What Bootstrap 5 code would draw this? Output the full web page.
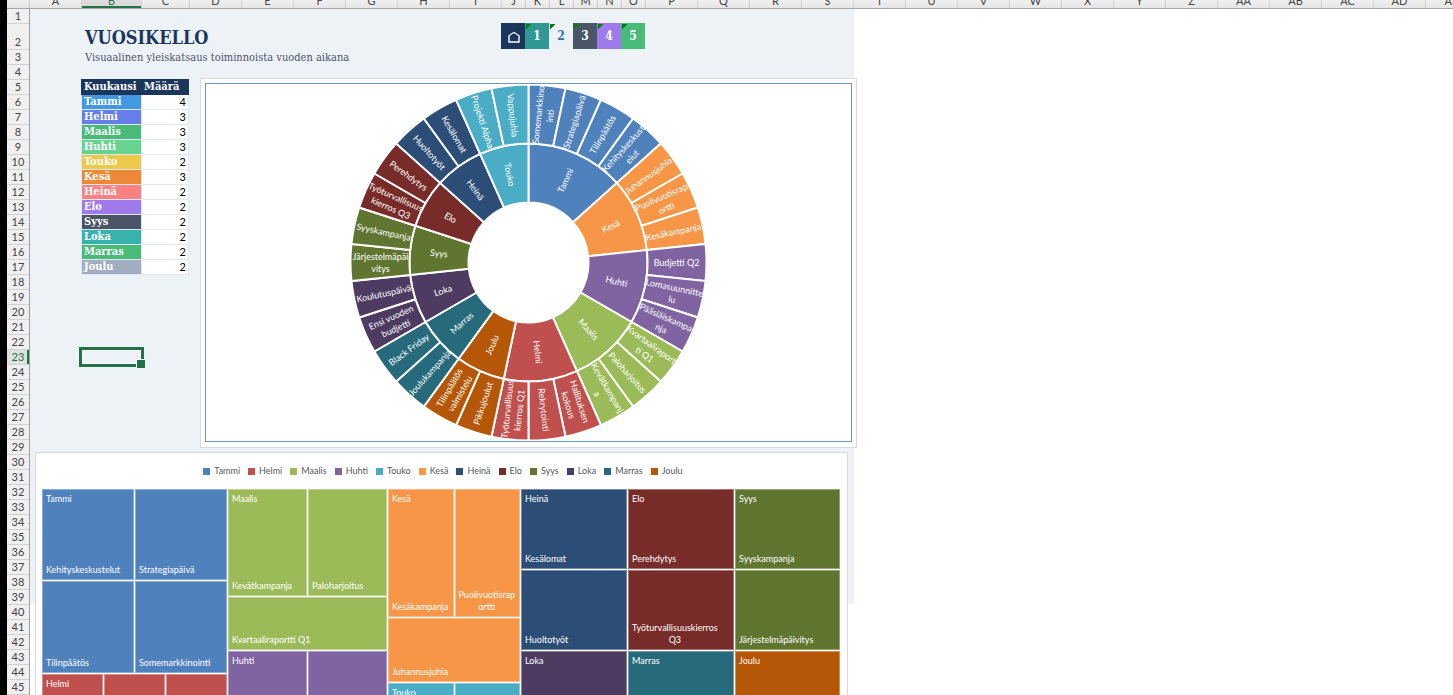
<!DOCTYPE html>
<html lang="fi">
<head>
<meta charset="utf-8">
<meta name="viewport" content="width=device-width, initial-scale=1">
<title>Vuosikello</title>
<link href="https://cdn.jsdelivr.net/npm/bootstrap@5.3.0/dist/css/bootstrap.min.css" rel="stylesheet">
<style>
  :root { --ui: Lato, "Open Sans", sans-serif; --serif: "DejaVu Serif Condensed", "DejaVu Serif", serif; --xl: #217346; }
  body { font-family: var(--ui); font-size: 11px; line-height: 15px; background: #fff; color: #000; }
  .edge { width: 7px; background: #000; }

  /* column and row headings */
  .heads { height: 9px; background: linear-gradient(#f0f0f0, #e6e6e6); border-bottom: 1px solid #a6a6a6; color: #444; }
  .corner { width: 23px; border-right: 1px solid #c8c8c8; }
  .head-cell { width: 52px; border-left: 1px solid #cfcfcf; line-height: 14px; }
  .head-cell.slim { width: 24px; }
  .head-cell.wide { width: 60px; }
  .head-cell.mid { width: 48px; }
  .head-cell.first { width: 51px; border-left: 0; }
  .head-cell.on { background: #dcdcdc; color: var(--xl); box-shadow: inset 0 -2px var(--xl); }
  .rows { width: 23px; background: #f0f0f0; border-right: 1px solid #a0a0a0; color: #444; }
  .row-cell { height: 15px; line-height: 14px; border-bottom: 1px solid #d2d2d2; }
  .row-cell.tall { height: 26px; }
  .row-cell.on { background: #e1e1e1; color: var(--xl); box-shadow: inset -2px 0 var(--xl); }

  /* sheet */
  .sheet { background: linear-gradient(#edf2f7, #edf2f7) no-repeat 0 0 / 824px 595px; }
  .sheet-top { padding: 14px 0 0 51px; height: 69px; }
  .title-box { width: 420px; padding-left: 4px; font-family: var(--serif); }
  .title-box h1 { font-size: 18px; line-height: 30px; font-weight: 700; color: #1a365d; }
  .title-box p { font-size: 11px; line-height: 10px; color: #4a5568; }
  .tab { width: 24px; height: 26px; font: bold 12px/27px var(--serif); color: #fff; text-decoration: none; }
  .flagged { background-image: linear-gradient(135deg, #008000 4px, transparent 4px); background-position: 1px 1px; background-repeat: no-repeat; }

  .side { width: 159px; padding-left: 51px; }
  .months { width: 108px; margin-top: 1px; table-layout: fixed; font-family: var(--serif); }
  .months th, .months td { height: 15px; line-height: 14px; padding: 0 2px; border: 1px solid #e2e8f0; vertical-align: bottom; }
  .months th { font-weight: 700; color: #fff; }
  .months thead th { background: #1a365d; border-color: #1a365d; }
  .months .name-col { width: 60px; }
  .months td { background: #fff; font-family: var(--ui); text-align: right; }
  .picked { width: 65px; height: 20px; margin: 72px 0 0 -2px; border: 3px solid var(--xl); box-shadow: inset 0 0 0 1px #fff; }
  .picked i { right: -4px; bottom: -4px; width: 9px; height: 9px; background: var(--xl); border: solid #fff; border-width: 1px 0 0 1px; }

  .chart-box { background: #fff; border: 1px solid #d9d9d9; font-size: 9px; line-height: 12px; }
  .ring-box { width: 657px; margin-left: 11px; padding: 4px 4px 5px; }
  .ring-frame { border: 1px solid #6f94c6; }
  .ring-frame svg { width: 357px; height: 357px; }
  .ring-frame path { stroke: #fff; stroke-width: 2; }
  .ring-frame text { fill: #fff; font-size: 9px; text-anchor: middle; dominant-baseline: central; }
  .tree-box { width: 813px; margin: 4px 0 0 5px; padding: 12px 7px 6px 6px; }
  .key { gap: 8px; color: #595959; margin-bottom: 12px; padding-left: 4px; }
  .key i { width: 7px; height: 7px; }

  /* treemap */
  .tree { display: grid; grid-template-columns: 185fr 159fr 132fr 106fr 106fr 105fr; gap: 1px; height: 330px; }
  .tree > div { display: grid; gap: 1px; min-width: 0; }
  .halves { grid-template-columns: 1fr 1fr; }
  .sixths { grid-template-columns: repeat(6, 1fr); grid-template-rows: 91px 92px 1fr; }
  .g-maalis { grid-template-rows: 107px 53px 1fr; }
  .g-kesa { grid-template-rows: 128px 64px 1fr; }
  .g-plain { grid-template-rows: 80px 80px 1fr; }
  .s2 { grid-column: span 2; }
  .s3 { grid-column: span 3; }
  .tile { display: flex; flex-direction: column; justify-content: space-between; align-items: flex-start; padding: 3px 2px 3px 3px; color: #fff; min-width: 0; white-space: nowrap; border: 1px solid rgba(255,255,255,.35); }
  .tile span:last-child { text-align: center; }

  .c-tammi { background-color: #4f81bd; } .c-helmi { background-color: #c0504d; }
  .c-maalis { background-color: #9bbb59; } .c-huhti { background-color: #8064a2; }
  .c-touko { background-color: #4bacc6; } .c-kesa { background-color: #f79646; }
  .c-heina { background-color: #2c4d75; } .c-elo { background-color: #772c2a; }
  .c-syys { background-color: #5f7530; } .c-loka { background-color: #4d3b62; }
  .c-marras { background-color: #276a7c; } .c-joulu { background-color: #b65708; }
  .m1 { background: #4299e1; } .m2 { background: #667eea; } .m3 { background: #48bb78; } .m4 { background: #68d391; }
  .m5 { background: #ecc94b; } .m6 { background: #ed8936; } .m7 { background: #fc8181; } .m8 { background: #9f7aea; }
  .m9 { background: #4a5568; } .m10 { background: #38b2ac; } .m11 { background: #48bb78; } .m12 { background: #a0aec0; }
  .t0 { background-color: #1a365d; } .t1 { background-color: #319795; } .t2 { color: #2b6cb0; }
  .t3 { background-color: #4a5568; } .t4 { background-color: #9f7aea; } .t5 { background-color: #48bb78; }
</style>
</head>
<body class="d-flex vh-100 overflow-hidden">
<div class="edge flex-shrink-0"></div>
<div class="flex-grow-1 overflow-hidden">
  <div class="heads d-flex overflow-hidden" id="heads"><div class="corner flex-shrink-0"></div></div>
  <div class="d-flex">
    <div class="rows flex-shrink-0 text-center" id="rows"></div>
    <main class="sheet flex-grow-1">
      <header class="sheet-top d-flex">
        <div class="title-box">
          <h1 class="m-0">VUOSIKELLO</h1>
          <p class="m-0">Visuaalinen yleiskatsaus toiminnoista vuoden aikana</p>
        </div>
        <nav class="d-flex text-center" aria-label="Sivut">
          <a class="tab t0" href="#" aria-label="Etusivu"><svg width="14" height="14" viewBox="0 0 14 14" fill="none" stroke="#fff" stroke-width="1.4"><path d="M3 12V6Q3.500 5 8 2.500Q12.500 5 13 6V12Z"/></svg></a>
          <a class="tab t1 flagged" href="#">1</a>
          <a class="tab t2 flagged" href="#">2</a>
          <a class="tab t3 flagged" href="#">3</a>
          <a class="tab t4 flagged" href="#">4</a>
          <a class="tab t5 flagged" href="#">5</a>
        </nav>
      </header>

      <section class="d-flex">
        <div class="side flex-shrink-0">
          <table class="months">
            <thead><tr><th scope="col" class="name-col">Kuukausi</th><th scope="col">Määrä</th></tr></thead>
            <tbody>
              <tr><th scope="row" class="m1">Tammi</th><td>4</td></tr>
              <tr><th scope="row" class="m2">Helmi</th><td>3</td></tr>
              <tr><th scope="row" class="m3">Maalis</th><td>3</td></tr>
              <tr><th scope="row" class="m4">Huhti</th><td>3</td></tr>
              <tr><th scope="row" class="m5">Touko</th><td>2</td></tr>
              <tr><th scope="row" class="m6">Kesä</th><td>3</td></tr>
              <tr><th scope="row" class="m7">Heinä</th><td>2</td></tr>
              <tr><th scope="row" class="m8">Elo</th><td>2</td></tr>
              <tr><th scope="row" class="m9">Syys</th><td>2</td></tr>
              <tr><th scope="row" class="m10">Loka</th><td>2</td></tr>
              <tr><th scope="row" class="m11">Marras</th><td>2</td></tr>
              <tr><th scope="row" class="m12">Joulu</th><td>2</td></tr>
            </tbody>
          </table>
          <div class="picked position-relative"><i class="position-absolute"></i></div>
        </div>
        <div class="chart-box ring-box flex-shrink-0">
          <div class="ring-frame"><svg id="ring" class="d-block mx-auto" viewBox="-178.500 -178.500 357 357" role="img" aria-label="Vuosikello"></svg></div>
        </div>
      </section>

      <section class="chart-box tree-box">
        <div class="key d-flex justify-content-center" id="key"></div>
        <div class="tree">
          <div class="sixths">
            <div class="tile s3 c-tammi"><span>Tammi</span><span>Kehityskeskustelut</span></div>
            <div class="tile s3 c-tammi"><span></span><span>Strategiapäivä</span></div>
            <div class="tile s3 c-tammi"><span></span><span>Tilinpäätös</span></div>
            <div class="tile s3 c-tammi"><span></span><span>Somemarkkinointi</span></div>
            <div class="tile s2 c-helmi"><span>Helmi</span></div>
            <div class="tile s2 c-helmi"></div>
            <div class="tile s2 c-helmi"></div>
          </div>
          <div class="halves g-maalis">
            <div class="tile c-maalis"><span>Maalis</span><span>Kevätkampanja</span></div>
            <div class="tile c-maalis"><span></span><span>Paloharjoitus</span></div>
            <div class="tile s2 c-maalis"><span></span><span>Kvartaaliraportti Q1</span></div>
            <div class="tile c-huhti"><span>Huhti</span></div>
            <div class="tile c-huhti"></div>
          </div>
          <div class="halves g-kesa">
            <div class="tile c-kesa"><span>Kesä</span><span>Kesäkampanja</span></div>
            <div class="tile c-kesa"><span></span><span>Puolivuotisrap<br>ortti</span></div>
            <div class="tile s2 c-kesa"><span></span><span>Juhannusjuhla</span></div>
            <div class="tile c-touko"><span>Touko</span></div>
            <div class="tile c-touko"></div>
          </div>
          <div class="g-plain">
            <div class="tile c-heina"><span>Heinä</span><span>Kesälomat</span></div>
            <div class="tile c-heina"><span></span><span>Huoltotyöt</span></div>
            <div class="tile c-loka"><span>Loka</span></div>
          </div>
          <div class="g-plain">
            <div class="tile c-elo"><span>Elo</span><span>Perehdytys</span></div>
            <div class="tile c-elo"><span></span><span>Työturvallisuuskierros<br>Q3</span></div>
            <div class="tile c-marras"><span>Marras</span></div>
          </div>
          <div class="g-plain">
            <div class="tile c-syys"><span>Syys</span><span>Syyskampanja</span></div>
            <div class="tile c-syys"><span></span><span>Järjestelmäpäivitys</span></div>
            <div class="tile c-joulu"><span>Joulu</span></div>
          </div>
        </div>
      </section>
    </main>
  </div>
</div>
<script src="https://cdn.jsdelivr.net/npm/bootstrap@5.3.0/dist/js/bootstrap.bundle.min.js"></script>
<script>
  // Headings: A..AE across, 1..46 down
  const sizes = { A: 'first', B: 'wide on', C: 'mid', J: 'slim', K: 'slim', L: 'slim', M: 'slim', N: 'slim', O: 'slim' };
  const abc = 'ABCDEFGHIJKLMNOPQRSTUVWXYZ'.split('');
  document.getElementById('heads').insertAdjacentHTML('beforeend',
    abc.concat(['AA', 'AB', 'AC', 'AD', 'AE']).map(n =>
      `<div class="head-cell ${sizes[n] || ''} flex-shrink-0 d-flex justify-content-center align-items-end">${n}</div>`).join(''));
  let rows = '';
  for (let n = 1; n <= 46; n++)
    rows += `<div class="row-cell ${n === 2 ? 'tall' : ''} ${n === 23 ? 'on' : ''} d-flex justify-content-center align-items-end">${n}</div>`;
  document.getElementById('rows').innerHTML = rows;

  // Legend
  const legend = [['Tammi', 'tammi'], ['Helmi', 'helmi'], ['Maalis', 'maalis'], ['Huhti', 'huhti'], ['Touko', 'touko'], ['Kesä', 'kesa'],
    ['Heinä', 'heina'], ['Elo', 'elo'], ['Syys', 'syys'], ['Loka', 'loka'], ['Marras', 'marras'], ['Joulu', 'joulu']];
  document.getElementById('key').innerHTML = legend.map(([t, c]) =>
    `<span class="d-flex align-items-center gap-1"><i class="c-${c}"></i>${t}</span>`).join('');

  // Sunburst: month, colour, events ("|" breaks a line)
  const months = [
    ['Tammi', '#4f81bd', ['Somemarkkino|inti', 'Strategiapäivä', 'Tilinpäätös', 'Kehityskeskust|elut']],
    ['Kesä', '#f79646', ['Juhannusjuhla', 'Puolivuotisrap|ortti', 'Kesäkampanja']],
    ['Huhti', '#8064a2', ['Budjetti Q2', 'Lomasuunnitte|lu', 'Pääsiäiskampa|nja']],
    ['Maalis', '#9bbb59', ['Kvartaaliraport|ti Q1', 'Paloharjoitus', 'Kevätkampanj|a']],
    ['Helmi', '#c0504d', ['Hallituksen|kokous', 'Rekrytointi', 'Työturvallisuus|kierros Q1']],
    ['Joulu', '#b65708', ['Pikkujoulut', 'Tilinpäätös|valmistelu']],
    ['Marras', '#276a7c', ['Joulukampanja', 'Black Friday']],
    ['Loka', '#4d3b62', ['Ensi vuoden|budjetti', 'Koulutuspäivä']],
    ['Syys', '#5f7530', ['Järjestelmäpäi|vitys', 'Syyskampanja']],
    ['Elo', '#772c2a', ['Työturvallisuus|kierros Q3', 'Perehdytys']],
    ['Heinä', '#2c4d75', ['Huoltotyöt', 'Kesälomat']],
    ['Touko', '#4bacc6', ['Projekti Alpha', 'Vappujuhla']]
  ];
  const total = months.reduce((s, m) => s + m[2].length, 0), step = 360 / total;
  const at = (r, a) => { const t = a * Math.PI / 180; return [Math.sin(t) * r, -Math.cos(t) * r].map(v => v.toFixed(2)).join(' '); };
  const slice = (r0, r1, a, b, c) => `<path fill="${c}" d="M${at(r0, a)}L${at(r1, a)}A${r1} ${r1} 0 0 1 ${at(r1, b)}L${at(r0, b)}A${r0} ${r0} 0 0 0 ${at(r0, a)}Z"/>`;
  const label = (r, a, t) => {
    const turn = a < 180 ? a - 90 : a - 270, parts = t.split('|');
    return `<g transform="translate(${at(r, a)}) rotate(${turn})">` +
      parts.map((p, i) => `<text y="${(i - (parts.length - 1) / 2) * 12}">${p}</text>`).join('') + '</g>';
  };
  let shapes = '', words = '', a = 0;
  months.forEach(([name, c, events]) => {
    const end = a + events.length * step;
    shapes += slice(60, 119, a, end, c);
    words += label(90, (a + end) / 2, name);
    events.forEach(e => { shapes += slice(119, 178, a, a + step, c); words += label(148, a + step / 2, e); a += step; });
  });
  document.getElementById('ring').innerHTML = shapes + words;
</script>
</body>
</html>
